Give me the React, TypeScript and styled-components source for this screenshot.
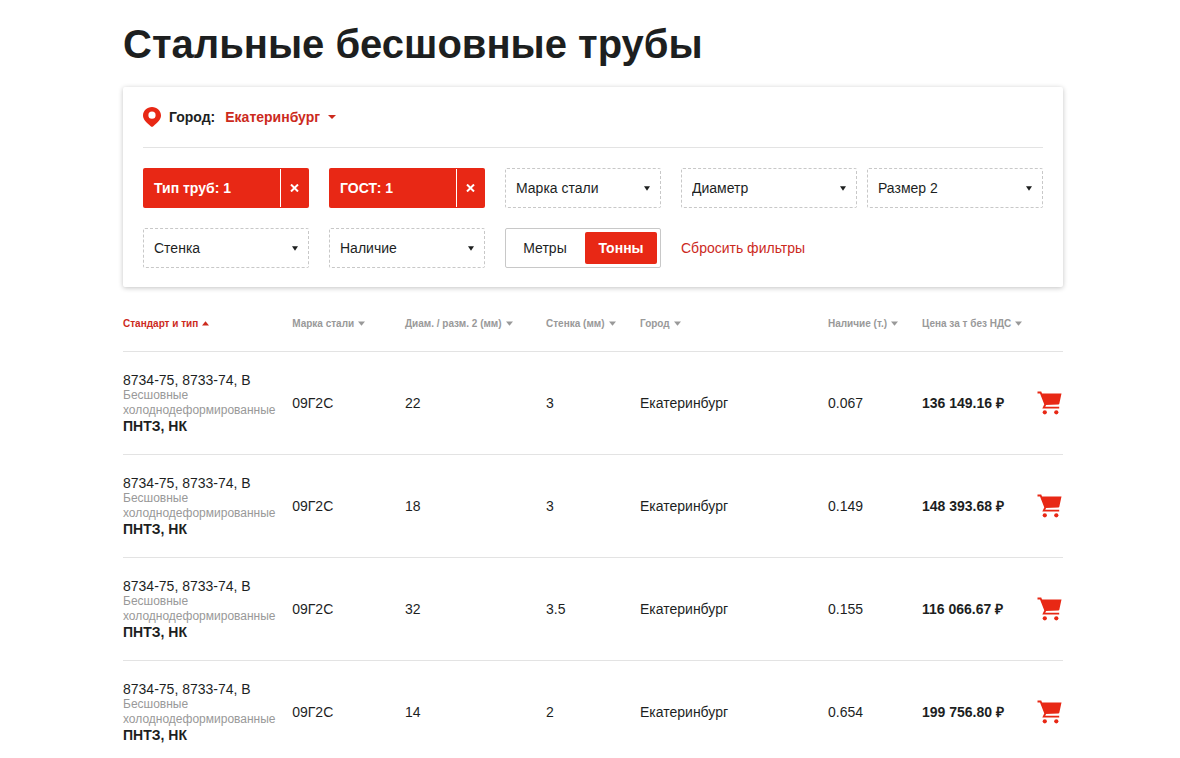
import React, { useState } from "react";
import styled, { createGlobalStyle } from "styled-components";

const color = {
  text: "#1d1f1f",
  red: "#e82815",
  link: "#cc2a1d",
  muted: "#999999",
  line: "#e3e3e3",
  outline: "#c8c8c8",
};

const GlobalStyle = createGlobalStyle`
  *, *::before, *::after { box-sizing: border-box; }
  body {
    margin: 0;
    background: #fff;
    color: ${color.text};
    font: 14px/16px "Liberation Sans", Arial, sans-serif;
  }
  button, select { font: inherit; color: inherit; }
  button {
    border: 0;
    padding: 0;
    background: none;
    cursor: pointer;
  }
`;

const Page = styled.main`
  padding: 20px 117px 0 123px;
`;

const Title = styled.h1`
  margin: 0 0 19px;
  font-size: 40px;
  line-height: 48px;
  font-weight: 700;
`;

const Card = styled.section`
  padding: 20px 20px 19px;
  border-radius: 2px;
  background: #fff;
  box-shadow: 0 1px 5px rgba(0, 0, 0, 0.24);
`;

const CityRow = styled.div`
  display: flex;
  align-items: center;
  height: 41px;
  padding-bottom: 20px;
  margin-bottom: 20px;
  border-bottom: 1px solid ${color.line};
  font-weight: 700;
`;

const CityLabel = styled.label`
  margin: 0 10px 0 8px;
`;

const SelectBox = styled.div`
  display: grid;
  align-items: center;
  flex: 1;
  min-width: 0;

  > * { grid-area: 1 / 1; }
`;

const CityBox = styled(SelectBox)`
  flex: none;
`;

const Arrow = styled.svg`
  justify-self: end;
  pointer-events: none;
`;

const FilterArrow = styled(Arrow)`
  margin-right: 11px;
`;

const CitySelect = styled.select`
  appearance: none;
  border: 0;
  padding: 0 16px 0 0;
  background: none;
  color: ${color.link};
  cursor: pointer;
`;

const FilterSelect = styled.select`
  appearance: none;
  width: 100%;
  height: 40px;
  padding: 0 26px 0 10px;
  border: 1px dashed ${color.outline};
  border-radius: 2px;
  background: none;
  cursor: pointer;
`;

const Filters = styled.div`
  display: grid;
  grid-template-columns: 166fr 156fr 156fr 362fr;
  gap: 20px;
`;

const FilterPair = styled.div`
  display: flex;
  gap: 10px;
`;

const ActiveFilter = styled.div`
  display: flex;
  align-items: stretch;
  height: 40px;
  padding: 1px 0;
  border-radius: 2px;
  background: ${color.red};
  color: #fff;
  font-weight: 700;
`;

const ActiveName = styled.button`
  flex: 1;
  padding: 0 11px;
  text-align: left;
`;

const ClearButton = styled.button`
  display: grid;
  place-items: center;
  width: 29px;
  padding-right: 2px;
  border-left: 1px solid #fff;
`;

const Units = styled.fieldset`
  display: flex;
  gap: 4px;
  height: 40px;
  margin: 0;
  padding: 3px;
  border: 1px solid ${color.outline};
  border-radius: 2px;
`;

const HiddenRadio = styled.input`
  appearance: none;
  width: 0;
  height: 0;
  margin: 0;
`;

const Unit = styled.label<{ $on: boolean }>`
  display: flex;
  flex: ${(p) => (p.$on ? "0 0 72px" : "1")};
  align-items: center;
  justify-content: center;
  border-radius: 2px;
  background: ${(p) => (p.$on ? color.red : "none")};
  color: ${(p) => (p.$on ? "#fff" : "inherit")};
  font-weight: ${(p) => (p.$on ? 700 : 400)};
  cursor: pointer;
`;

const ResetButton = styled.button`
  justify-self: start;
  color: ${color.link};
`;

const Table = styled.table`
  width: 100%;
  margin-top: 29px;
  border-collapse: collapse;
  table-layout: fixed;
`;

const HeadCell = styled.th<{ $width: string }>`
  width: ${(p) => p.$width};
  height: 35px;
  padding: 0 0 20px;
  text-align: left;
  font-size: 10px;
  line-height: 15px;
`;

const Row = styled.tr`
  border-bottom: 1px solid ${color.line};
`;

const SortButton = styled.button<{ $active: boolean }>`
  display: flex;
  align-items: center;
  gap: 4px;
  color: ${(p) => (p.$active ? color.link : color.muted)};
  font-weight: 700;
  white-space: nowrap;
`;

const Cell = styled.td`
  padding: 20px 0;
  vertical-align: middle;
`;

const Kind = styled.div`
  width: min-content;
  color: ${color.muted};
  font-size: 12px;
  line-height: 15px;
`;

const Strong = styled.div`
  font-weight: 700;
`;

const CartCell = styled(Cell)`
  padding: 0 1px 0 0;
`;

const CartButton = styled.button`
  display: block;
  margin-left: auto;

  svg { display: block; }
`;

const Triangle = ({ up = false }: { up?: boolean }) => (
  <svg width="7" height="5" viewBox="0 0 7 5" fill="currentColor" aria-hidden="true">
    <path d={up ? "M0 4.600 3.500 0.300 7 4.600z" : "M0 0.400 3.500 4.700 7 0.400z"} />
  </svg>
);

const Pin = () => (
  <svg width="18" height="20" viewBox="0 0 18 20" aria-hidden="true">
    <path
      fill={color.red}
      fillRule="evenodd"
      d="M9 0C4 0 0 3.800 0 8.600c0 4 3.400 6.900 7.700 10.700L9 20l1.300-.7C14.600 15.500 18 12.600 18 8.600 18 3.800 14 0 9 0zm0 4.600a3.600 3.600 0 1 1 0 7.200 3.600 3.600 0 0 1 0-7.200z"
    />
  </svg>
);

const Cross = () => (
  <svg width="9" height="8" viewBox="0 0 9 8" aria-hidden="true">
    <path d="M1 0.500 8 7.500M8 0.500 1 7.500" stroke="#fff" strokeWidth="2" />
  </svg>
);

const Cart = () => (
  <svg width="25" height="24" viewBox="0 0 25 24" aria-hidden="true">
    <path
      d="M0.500 1.500h3.100L8.300 13.400l-1.500 3.200h15.400"
      fill="none"
      stroke={color.red}
      strokeWidth="1.900"
    />
    <path d="M4 2.500h20.500l-2.200 10.200a1 1 0 0 1-1 .8L8.200 14z" fill={color.red} />
    <circle cx="7.800" cy="21.300" r="2.100" fill={color.red} />
    <circle cx="19.300" cy="21.300" r="2.100" fill={color.red} />
  </svg>
);

const Filter = ({ name }: { name: string }) => (
  <SelectBox>
    <FilterSelect aria-label={name}>
      <option>{name}</option>
    </FilterSelect>
    <FilterArrow width="6" height="5" viewBox="0 0 6 5" aria-hidden="true">
      <path d="M0 0.300h6L3 4.800z" fill={color.text} />
    </FilterArrow>
  </SelectBox>
);

const Chosen = ({ name }: { name: string }) => (
  <ActiveFilter>
    <ActiveName type="button">{name}</ActiveName>
    <ClearButton type="button" aria-label="Очистить">
      <Cross />
    </ClearButton>
  </ActiveFilter>
);

const columns = [
  { name: "Стандарт и тип", width: "18%" },
  { name: "Марка стали", width: "12%" },
  { name: "Диам. / разм. 2 (мм)", width: "15%" },
  { name: "Стенка (мм)", width: "10%" },
  { name: "Город", width: "20%" },
  { name: "Наличие (т.)", width: "10%" },
  { name: "Цена за т без НДС", width: "12%" },
];

const pipes = [
  { diameter: "22", wall: "3", stock: "0.067", price: "136 149.16 ₽" },
  { diameter: "18", wall: "3", stock: "0.149", price: "148 393.68 ₽" },
  { diameter: "32", wall: "3.5", stock: "0.155", price: "116 066.67 ₽" },
  { diameter: "14", wall: "2", stock: "0.654", price: "199 756.80 ₽" },
];

export default function App() {
  const [unit, setUnit] = useState("Тонны");

  return (
    <Page>
      <GlobalStyle />
      <Title>Стальные бесшовные трубы</Title>

      <Card>
        <CityRow>
          <Pin />
          <CityLabel htmlFor="city">Город:</CityLabel>
          <CityBox>
            <CitySelect id="city">
              <option>Екатеринбург</option>
            </CitySelect>
            <Arrow width="8" height="4" viewBox="0 0 8 4" aria-hidden="true">
              <path d="M0 0h8L4 4z" fill={color.link} />
            </Arrow>
          </CityBox>
        </CityRow>

        <Filters>
          <Chosen name="Тип труб: 1" />
          <Chosen name="ГОСТ: 1" />
          <Filter name="Марка стали" />
          <FilterPair>
            <Filter name="Диаметр" />
            <Filter name="Размер 2" />
          </FilterPair>
          <Filter name="Стенка" />
          <Filter name="Наличие" />
          <Units aria-label="Единицы">
            {["Метры", "Тонны"].map((name) => (
              <Unit key={name} $on={unit === name}>
                <HiddenRadio
                  type="radio"
                  name="unit"
                  checked={unit === name}
                  onChange={() => setUnit(name)}
                />
                {name}
              </Unit>
            ))}
          </Units>
          <ResetButton type="button">Сбросить фильтры</ResetButton>
        </Filters>
      </Card>

      <Table>
        <thead>
          <Row>
            {columns.map((column, i) => (
              <HeadCell key={column.name} $width={column.width} scope="col">
                <SortButton type="button" $active={i === 0}>
                  {column.name}
                  <Triangle up={i === 0} />
                </SortButton>
              </HeadCell>
            ))}
            <HeadCell as="td" $width="3%" />
          </Row>
        </thead>
        <tbody>
          {pipes.map((pipe) => (
            <Row key={pipe.price}>
              <Cell>
                <div>8734-75, 8733-74, В</div>
                <Kind>Бесшовные холоднодеформированные</Kind>
                <Strong>ПНТЗ, НК</Strong>
              </Cell>
              <Cell>09Г2С</Cell>
              <Cell>{pipe.diameter}</Cell>
              <Cell>{pipe.wall}</Cell>
              <Cell>Екатеринбург</Cell>
              <Cell>{pipe.stock}</Cell>
              <Cell>
                <Strong>{pipe.price}</Strong>
              </Cell>
              <CartCell>
                <CartButton type="button" aria-label="В корзину">
                  <Cart />
                </CartButton>
              </CartCell>
            </Row>
          ))}
        </tbody>
      </Table>
    </Page>
  );
}
